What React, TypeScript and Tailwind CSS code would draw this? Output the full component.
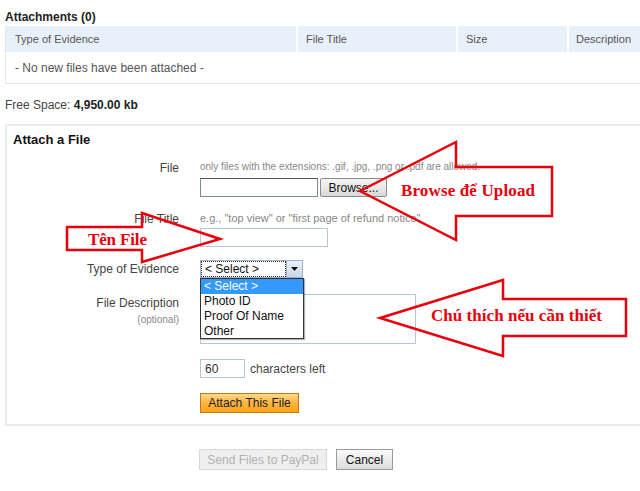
import React from 'react';

// Red callout arrows drawn over the form (outline only, content shows through)
function Callouts() {
  return (
    <svg className="absolute left-0 top-0 pointer-events-none" width="640" height="491" viewBox="0 0 640 491">
      <g fill="none" stroke="#e8000c" strokeWidth="2.5" strokeLinejoin="miter">
        <polygon points="360,191 456,142 456,167 552,167 552,216 456,216 456,240" />
        <polygon points="67,227 142,227 142,213 220,239 142,262 142,250 67,250" />
        <polygon points="380,318 503,280 503,299 626,299 626,336 503,336 503,356" />
      </g>
      <g fill="#e8000c" fontFamily="'Liberation Serif', 'DejaVu Serif', serif" fontWeight="bold">
        <text x="401" y="196" fontSize="17" textLength="134">Browse để Upload</text>
        <text x="88" y="245" fontSize="17" textLength="59">Tên File</text>
        <text x="431" y="321" fontSize="17" textLength="171">Chú thích nếu cần thiết</text>
      </g>
    </svg>
  );
}

function Label({ children }: { children: React.ReactNode }) {
  return <div className="w-[172px] shrink-0 text-right text-[12px] leading-[14px] text-[#444]">{children}</div>;
}

export default function App() {
  return (
    <div className="relative w-[640px] h-[491px] overflow-hidden bg-white text-[12px] text-[#333] font-['Liberation_Sans',Arial,sans-serif]">
      {/* Attachments table */}
      <div className="pl-[5px] pt-[10px]">
        <div className="font-bold text-[12px] leading-[14px] text-[#222]">Attachments (0)</div>
        <div className="mt-[2px] w-[660px] border-l border-b border-[#e6e6e6]">
          <div className="flex h-[26px] items-center bg-[#e8f0fa] text-[11px] text-[#555]">
            <div className="w-[292px] pl-[9px] h-full flex items-center border-r-2 border-white">Type of Evidence</div>
            <div className="w-[160px] pl-[8px] h-full flex items-center border-r-2 border-white">File Title</div>
            <div className="w-[111px] pl-[8px] h-full flex items-center border-r-2 border-white">Size</div>
            <div className="flex-1 pl-[7px] h-full flex items-center">Description</div>
          </div>
          <div className="h-[31px] flex items-center pl-[9px] text-[12px] text-[#555]">- No new files have been attached -</div>
        </div>
        <div className="mt-[12px] text-[12px] text-[#444]">
          Free Space: <span className="font-bold text-[#222]">4,950.00 kb</span>
        </div>
      </div>

      {/* Attach a file box */}
      <div className="ml-[5px] mt-[10px] w-[660px] h-[302px] border-2 border-[#ececec]">
        <div className="pl-[6px] pt-[6px] font-bold text-[13px] leading-[16px] text-[#111]">Attach a File</div>

        <div className="mt-[13px] flex gap-[21px]">
          <Label>File</Label>
          <div>
            <div className="text-[10px] leading-[12px] text-[#888]">only files with the extensions: .gif, .jpg, .png or .pdf are allowed.</div>
            <div className="mt-[5px] flex items-center gap-[2px]">
              <div className="w-[118px] h-[19px] border border-[#7f8a99] border-t-[#555] bg-white" />
              <div className="w-[67px] h-[19px] flex items-center justify-center rounded-[2px] border border-[#8a8a8a] bg-gradient-to-b from-[#f6f6f6] to-[#d9d9d9] text-[12px] text-[#111]">Browse...</div>
            </div>
          </div>
        </div>

        <div className="mt-[15px] flex gap-[21px]">
          <Label>File Title</Label>
          <div>
            <div className="text-[11px] leading-[12px] text-[#888]">e.g., "top view" or "first page of refund notice"</div>
            <div className="mt-[4px] w-[128px] h-[19px] border border-[#b5c4d8] bg-white" />
          </div>
        </div>

        <div className="mt-[13px] flex gap-[21px] items-center">
          <Label>Type of Evidence</Label>
          <div className="relative">
            <div className="flex w-[103px] h-[18px] border border-[#9fb3cc] bg-white">
              <div className="flex-1 flex items-center pl-[3px] border border-dotted border-[#333] text-[12px] text-[#111]">&lt; Select &gt;</div>
              <div className="w-[16px] flex items-center justify-center bg-gradient-to-b from-[#e9f0f8] to-[#c9d7e8] border-l border-[#9fb3cc]">
                <svg width="7" height="4" viewBox="0 0 7 4"><polygon points="0,0 7,0 3.5,4" fill="#111" /></svg>
              </div>
            </div>
            <div className="absolute left-0 top-[18px] z-10 w-[104px] border border-[#333] bg-white text-[12px] leading-[14px] text-[#111] shadow-[1px_1px_1px_rgba(0,0,0,0.3)]">
              <div className="bg-[#3399ff] text-white pl-[3px] h-[15px]">&lt; Select &gt;</div>
              <div className="pl-[3px] h-[15px]">Photo ID</div>
              <div className="pl-[3px] h-[15px]">Proof Of Name</div>
              <div className="pl-[3px] h-[14px]">Other</div>
            </div>
          </div>
        </div>

        <div className="mt-[16px] flex gap-[21px]">
          <Label>
            <div className="pt-[2px]">File Description</div>
            <div className="mt-[4px] text-[10px] leading-[12px] text-[#888]">(optional)</div>
          </Label>
          <div>
            <div className="w-[216px] h-[50px] border border-[#b5c4d8] bg-white" />
            <div className="mt-[15px] flex items-center gap-[5px]">
              <div className="w-[45px] h-[19px] flex items-center pl-[4px] border border-[#b5c4d8] text-[12px] text-[#333]">60</div>
              <span className="text-[12px] text-[#444]">characters left</span>
            </div>
            <div className="mt-[15px] w-[99px] h-[20px] flex items-center justify-center border border-[#c07a10] bg-gradient-to-b from-[#ffd98a] via-[#ffb43a] to-[#ffa41e] text-[12px] text-[#222]">Attach This File</div>
          </div>
        </div>
      </div>

      {/* Footer buttons */}
      <div className="mt-[23px] ml-[199px] flex gap-[9px]">
        <div className="w-[128px] h-[21px] flex items-center justify-center border border-[#d8d8d8] bg-[#efefef] text-[12px] text-[#b0b0b0]">Send Files to PayPal</div>
        <div className="w-[57px] h-[21px] flex items-center justify-center border border-[#9a9a9a] bg-gradient-to-b from-[#fafafa] to-[#dcdcdc] text-[12px] text-[#111]">Cancel</div>
      </div>

      <Callouts />
    </div>
  );
}
